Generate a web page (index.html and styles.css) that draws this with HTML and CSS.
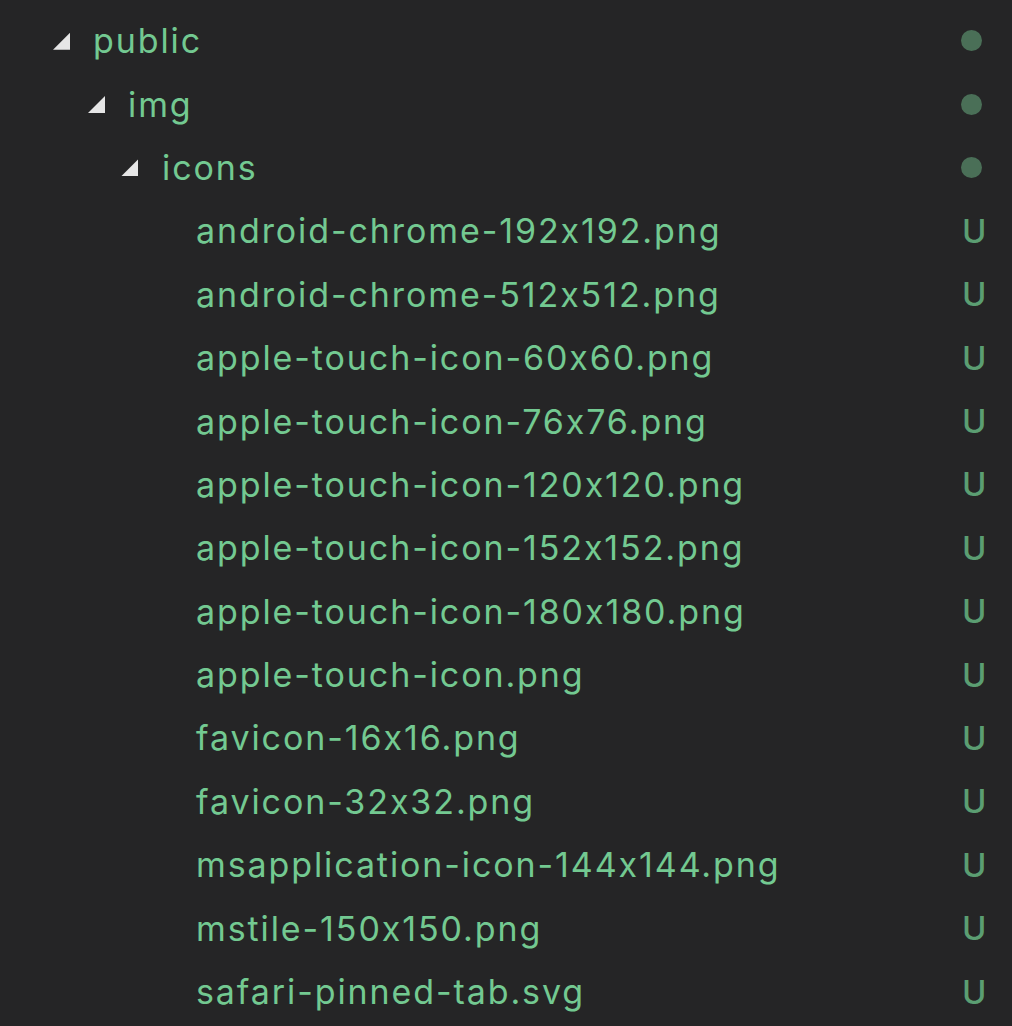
FILE: index.html
```html
<!DOCTYPE html>
<html>
<head>
<meta charset="utf-8">
<link rel="stylesheet" href="styles.css">
</head>
<body>
<div class="tree">
  <div class="row lvl0"><span class="twist"></span><span class="name">public</span><span class="dot"></span></div>
  <div class="row lvl1"><span class="twist"></span><span class="name">img</span><span class="dot"></span></div>
  <div class="row lvl2"><span class="twist"></span><span class="name">icons</span><span class="dot"></span></div>
  <div class="row lvl3"><span class="name">android-chrome-192x192.png</span><span class="badge">U</span></div>
  <div class="row lvl3"><span class="name">android-chrome-512x512.png</span><span class="badge">U</span></div>
  <div class="row lvl3"><span class="name">apple-touch-icon-60x60.png</span><span class="badge">U</span></div>
  <div class="row lvl3"><span class="name">apple-touch-icon-76x76.png</span><span class="badge">U</span></div>
  <div class="row lvl3"><span class="name">apple-touch-icon-120x120.png</span><span class="badge">U</span></div>
  <div class="row lvl3"><span class="name">apple-touch-icon-152x152.png</span><span class="badge">U</span></div>
  <div class="row lvl3"><span class="name">apple-touch-icon-180x180.png</span><span class="badge">U</span></div>
  <div class="row lvl3"><span class="name">apple-touch-icon.png</span><span class="badge">U</span></div>
  <div class="row lvl3"><span class="name">favicon-16x16.png</span><span class="badge">U</span></div>
  <div class="row lvl3"><span class="name">favicon-32x32.png</span><span class="badge">U</span></div>
  <div class="row lvl3"><span class="name">msapplication-icon-144x144.png</span><span class="badge">U</span></div>
  <div class="row lvl3"><span class="name">mstile-150x150.png</span><span class="badge">U</span></div>
  <div class="row lvl3"><span class="name">safari-pinned-tab.svg</span><span class="badge">U</span></div>
</div>
</body>
</html>
```
FILE: styles.css
```css
html, body {
  margin: 0;
  padding: 0;
  background: #252526;
}
body {
  width: 1012px;
  height: 1026px;
  overflow: hidden;
  font-family: Inter, "Open Sans", sans-serif;
}
.tree {
  padding-top: 9px;
}
.row {
  display: flex;
  align-items: center;
  height: 63.4px;
  padding-right: 29px;
  color: #73c991;
  font-size: 34px;
  letter-spacing: 1.9px;
}
.lvl0 { padding-left: 53px; }
.lvl1 { padding-left: 88px; }
.lvl2 { padding-left: 121px; }
.lvl3 { padding-left: 196px; }
.twist {
  width: 17px;
  height: 17px;
  margin-right: 23px;
  margin-top: 1px;
  background: #e6e6e6;
  clip-path: polygon(100% 0, 100% 100%, 0 100%);
  flex: none;
}
.lvl2 .twist { margin-right: 24px; }
.name {
  flex: 1;
  white-space: nowrap;
}
.dot {
  width: 21px;
  height: 21px;
  border-radius: 50%;
  background: #4a6f57;
  margin-right: 1px;
  flex: none;
}
.badge {
  color: #5b9e72;
  font-size: 33px;
  font-weight: 500;
  letter-spacing: 0;
  width: 24px;
  text-align: center;
  flex: none;
  margin-right: -3px;
}
```
